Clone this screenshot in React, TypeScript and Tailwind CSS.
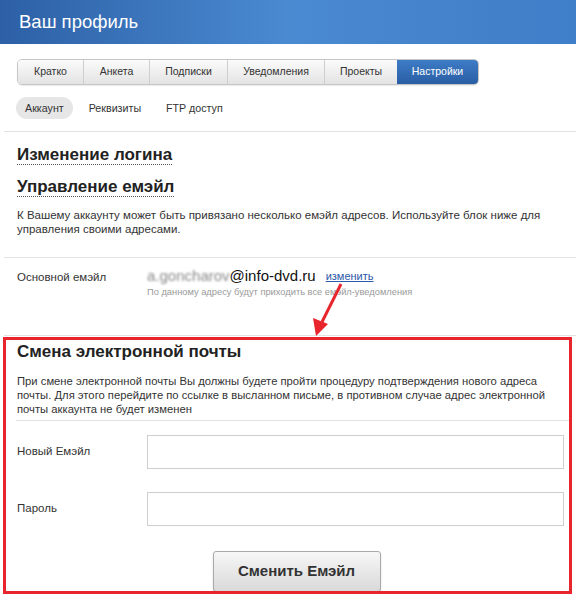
import React from "react";

const tabs = [
  { label: "Кратко", cls: "w-[65px]" },
  { label: "Анкета", cls: "w-[66px] border-l border-[#cfcfcf]" },
  { label: "Подписки", cls: "w-[78px] border-l border-[#cfcfcf]" },
  { label: "Уведомления", cls: "w-[97px] border-l border-[#cfcfcf]" },
  { label: "Проекты", cls: "w-[73px] border-l border-[#cfcfcf]" },
];

export default function App() {
  return (
    <div className="relative w-[576px] h-[600px] overflow-hidden bg-white text-[#333] font-['Liberation_Sans',Arial,sans-serif]">
      {/* Header */}
      <div className="h-[44px] flex items-center pl-[19px] bg-gradient-to-r from-[#2d60a6] via-[#4a8ad1] to-[#3f7ec8]">
        <h1 className="text-[18.5px] leading-none text-white font-normal">Ваш профиль</h1>
      </div>

      {/* Tabs */}
      <div className="mt-[15px] ml-[17px] flex h-[26px] w-[462px] rounded-[5px] border border-[#c6c6c6] overflow-hidden shadow-[0_1px_1px_rgba(0,0,0,0.08)]">
        {tabs.map((t) => (
          <div
            key={t.label}
            className={`${t.cls} flex items-center justify-center text-[10.5px] text-[#333] bg-gradient-to-b from-[#fbfbfb] to-[#e3e3e3]`}
          >
            {t.label}
          </div>
        ))}
        <div className="flex-1 flex items-center justify-center text-[10.5px] text-white bg-gradient-to-b from-[#3d7cc6] to-[#2a5ea4]">
          Настройки
        </div>
      </div>

      {/* Sub tabs */}
      <div className="mt-[12px] ml-[16px] flex gap-[7px] h-[22px] text-[10.7px]">
        <div className="px-[9px] flex items-center rounded-full bg-[#e6e6e6]">Аккаунт</div>
        <div className="px-[9px] flex items-center">Реквизиты</div>
        <div className="px-[9px] flex items-center">FTP доступ</div>
      </div>

      <div className="mt-[12px] ml-[4px] border-t border-[#e2e2e2]" />

      {/* Headings */}
      <div className="pl-[17px]">
        <div className="mt-[11px]">
          <span className="inline-block text-[17px] leading-[19px] font-bold text-[#222] border-b border-dotted border-[#555]">
            Изменение логина
          </span>
        </div>
        <div className="mt-[8px]">
          <span className="inline-block text-[17px] leading-[19px] font-bold text-[#222] border-b border-dotted border-[#555]">
            Управление емэйл
          </span>
        </div>
        <p className="mt-[9px] text-[11.5px] leading-[14px] pr-[20px]">
          К Вашему аккаунту может быть привязано несколько емэйл адресов. Используйте блок ниже для
          управления своими адресами.
        </p>
      </div>

      <div className="mt-[21px] ml-[4px] border-t border-[#e2e2e2]" />

      {/* Primary email row */}
      <div className="mt-[9px] pl-[17px] grid grid-cols-[130px_1fr]">
        <div className="text-[11.5px] leading-[18px] pt-[1px]">Основной емэйл</div>
        <div>
          <div className="flex items-center h-[18px]">
            <span className="text-[15px] leading-[18px] text-[#8a8a8a] blur-[1.2px] select-none">a.goncharov</span>
            <span className="text-[15px] leading-[18px] text-[#111]">@info-dvd.ru</span>
            <a className="ml-[10px] text-[11px] leading-[14px] text-[#2c58a8] underline">изменить</a>
          </div>
          <div className="mt-[1px] text-[9.3px] leading-[13px] text-[#9a9a9a]">
            По данному адресу будут приходить все емэйл-уведомления
          </div>
        </div>
      </div>

      <div className="mt-[36px] ml-[4px] border-t border-[#e2e2e2]" />

      {/* Change email section */}
      <div className="relative mt-[1px] ml-[3px] w-[569px] h-[257px]">
        <div className="pt-[5px] pl-[14px] pr-[5px]">
          <h2 className="text-[17px] leading-[20px] font-bold text-[#222]">Смена электронной почты</h2>
          <p className="mt-[12px] text-[11.25px] leading-[14px]">
            При смене электронной почты Вы должны будете пройти процедуру подтверждения нового адреса
            почты. Для этого перейдите по ссылке в высланном письме, в противном случае адрес электронной
            почты аккаунта не будет изменен
          </p>
        </div>
        <div className="mt-[4px] ml-[13px] border-t border-[#e2e2e2]" />
        <div className="pl-[14px] pr-[8px]">
          <div className="mt-[14px] grid grid-cols-[130px_1fr] items-center">
            <label className="text-[11.5px]">Новый Емэйл</label>
            <input className="h-[34px] border border-[#cfcfcf] bg-white outline-none" />
          </div>
          <div className="mt-[23px] grid grid-cols-[130px_1fr] items-center">
            <label className="text-[11.5px]">Пароль</label>
            <input type="password" className="h-[34px] border border-[#cfcfcf] bg-white outline-none" />
          </div>
          <div className="mt-[25px] flex justify-center pl-[12px]">
            <button className="w-[168px] h-[41px] rounded-[3px] border border-[#a9a9a9] bg-gradient-to-b from-[#f7f7f7] to-[#d9d9d9] text-[15px] font-bold text-[#333] shadow-[0_1px_2px_rgba(0,0,0,0.15)]">
              Сменить Емэйл
            </button>
          </div>
        </div>
        {/* red annotation frame */}
        <div className="pointer-events-none absolute inset-0 border-[3px] border-[#e8242c]" />
      </div>

      {/* red annotation arrow */}
      <svg className="pointer-events-none absolute left-0 top-0" width="576" height="600">
        <line x1="341" y1="284" x2="322" y2="322" stroke="#e8242c" strokeWidth="3" />
        <polygon points="316,336 313,318 328,324" fill="#e8242c" />
      </svg>
    </div>
  );
}
